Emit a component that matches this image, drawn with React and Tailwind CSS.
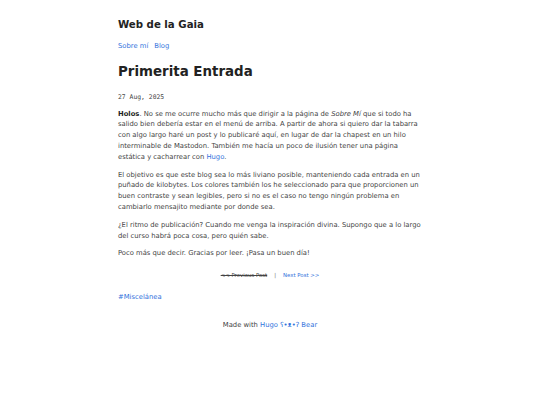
export default function App() {
  const font = { fontFamily: '"DejaVu Sans", Verdana, sans-serif' }
  return (
    <div className="min-h-screen bg-white text-[#444]" style={font}>
      <div className="max-w-[304px] mx-auto pt-[18px] text-[6.8px] leading-[10.8px]">
        {/* Header */}
        <header>
          <a href="#" className="block text-[#222] font-bold text-[10.2px] leading-[14px]">
            Web de la Gaia
          </a>
          <nav className="mt-[9px] flex gap-[6px] text-[#3273dc]">
            <a href="#">Sobre mí</a>
            <a href="#">Blog</a>
          </nav>
        </header>

        <main>
          <h1 className="mt-[11px] text-[#222] font-bold text-[13.4px] leading-[18px]">Primerita Entrada</h1>

          <p className="mt-[11px] text-[6.4px]" style={{ fontFamily: '"DejaVu Sans Mono", monospace' }}>
            27 Aug, 2025
          </p>

          <div className="mt-[6px] space-y-[7px]">
            <p>
              <strong className="text-[#222]">Holos</strong>. No se me ocurre mucho más que dirigir a la página de{' '}
              <em>Sobre Mí</em> que si todo ha salido bien debería estar en el menú de arriba. A partir de ahora si
              quiero dar la tabarra con algo largo haré un post y lo publicaré aquí, en lugar de dar la chapest en un
              hilo interminable de Mastodon. También me hacía un poco de ilusión tener una página estática y
              cacharrear con <a href="#" className="text-[#3273dc]">Hugo</a>.
            </p>
            <p>
              El objetivo es que este blog sea lo más liviano posible, manteniendo cada entrada en un puñado de
              kilobytes. Los colores también los he seleccionado para que proporcionen un buen contraste y sean
              legibles, pero si no es el caso no tengo ningún problema en cambiarlo mensajito mediante por donde sea.
            </p>
            <p>
              ¿El ritmo de publicación? Cuando me venga la inspiración divina. Supongo que a lo largo del curso habrá
              poca cosa, pero quién sabe.
            </p>
            <p>Poco más que decir. Gracias por leer. ¡Pasa un buen día!</p>
          </div>

          {/* Paginación */}
          <div className="mt-[11px] flex justify-center items-center gap-[7px] text-[5.4px]">
            <span className="line-through">&lt;&lt; Previous Post</span>
            <span className="text-[#666]">|</span>
            <a href="#" className="text-[#3273dc]">Next Post &gt;&gt;</a>
          </div>

          <p className="mt-[11px]">
            <a href="#" className="text-[#3273dc]">#Miscelánea</a>
          </p>
        </main>

        <footer className="mt-[17px] text-center">
          Made with <a href="#" className="text-[#3273dc]">Hugo ʕ•ᴥ•ʔ Bear</a>
        </footer>
      </div>
    </div>
  )
}
